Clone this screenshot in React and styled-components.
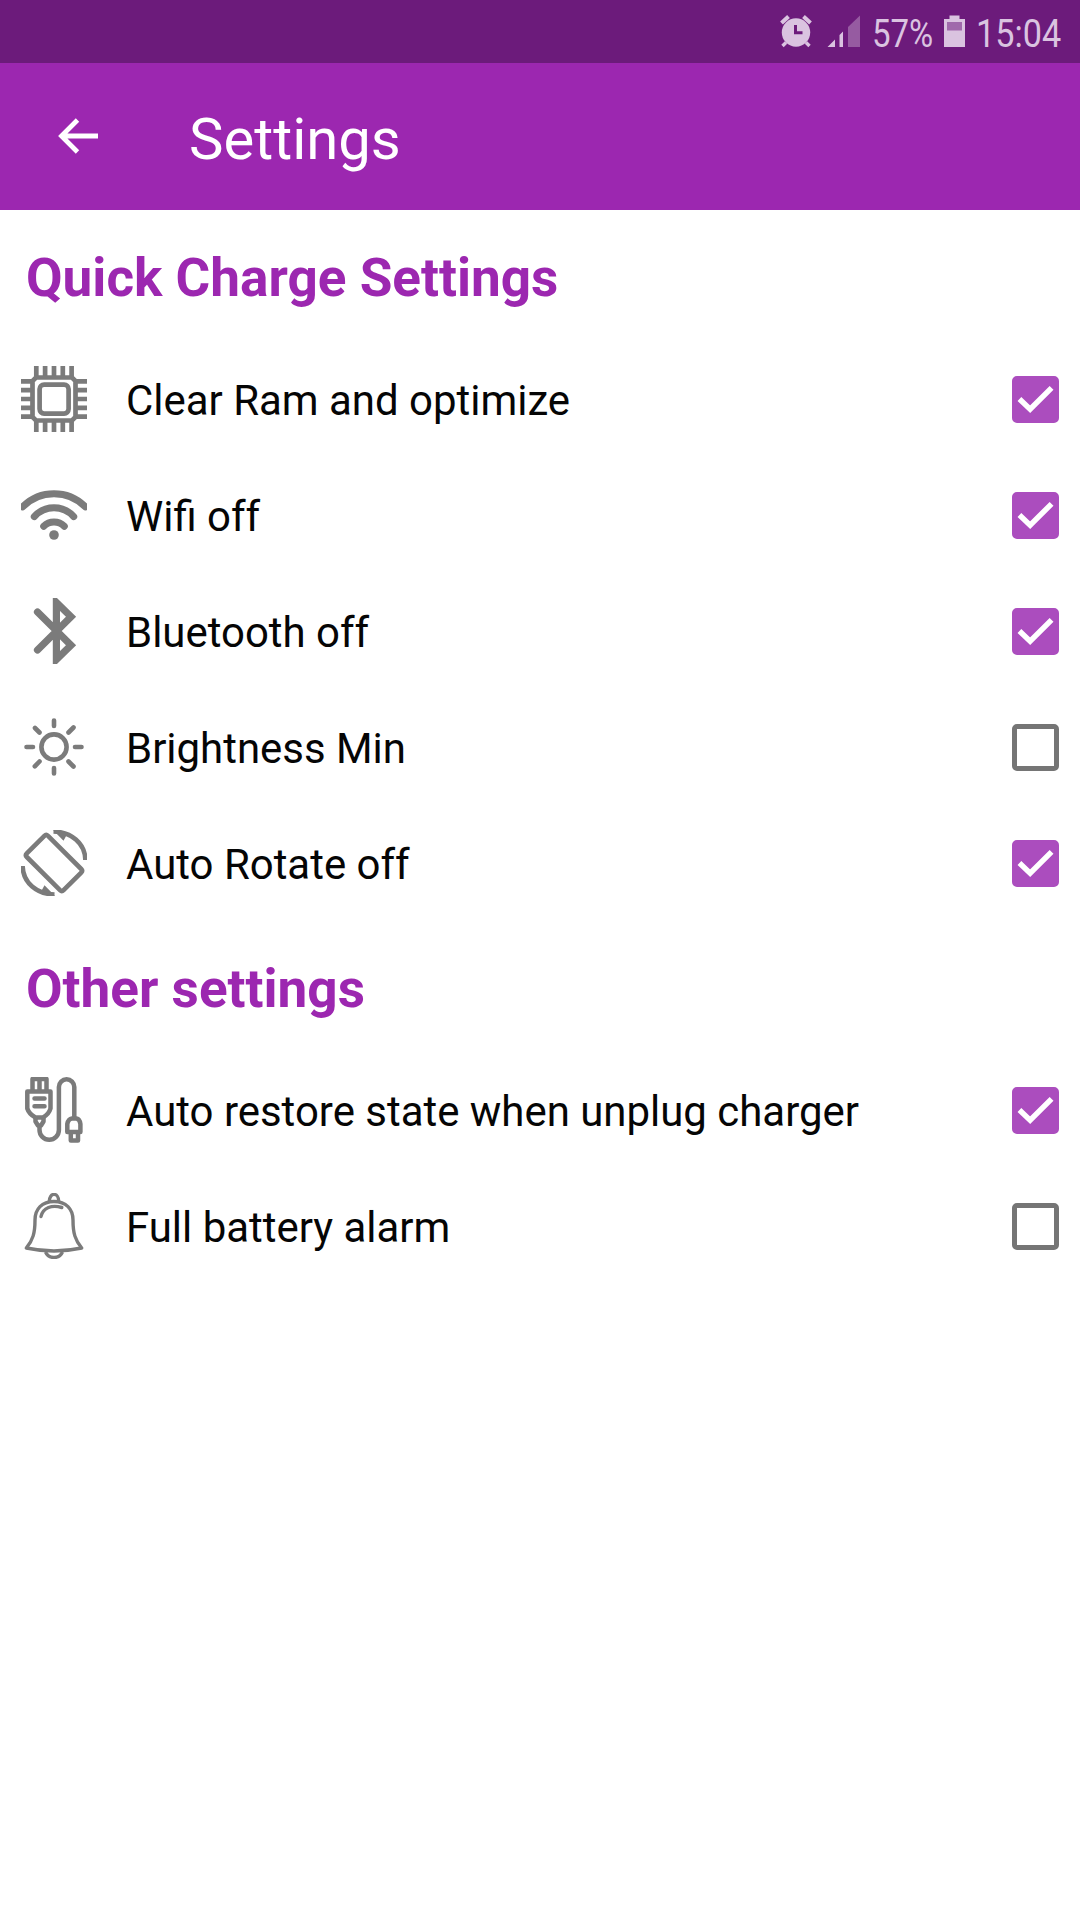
import React, { useState } from "react";
import styled, { createGlobalStyle } from "styled-components";

const GlobalStyle = createGlobalStyle`
  * { box-sizing: border-box; }
  body { margin: 0; background: #fff; }
`;

const Screen = styled.div`
  display: flex;
  flex-direction: column;
  width: 1080px;
  height: 1920px;
  background: #fff;
  font-family: Roboto, "Noto Sans", sans-serif;
  overflow: hidden;
`;

const StatusBar = styled.header`
  display: flex;
  justify-content: flex-end;
  align-items: center;
  height: 63px;
  padding-right: 18px;
  background: #6c1b7b;
  color: #dac3e0;
`;

const StatusIcon = styled.svg`
  display: block;
  flex: none;
  margin-right: ${(p) => p.$gap}px;
`;

const StatusText = styled.div`
  flex: none;
  width: ${(p) => p.$width}px;
  margin-right: ${(p) => p.$gap || 0}px;
  font-size: 39.5px;
  line-height: 63px;
  white-space: nowrap;
  padding-top: 3px;
  transform: scaleX(${(p) => p.$squeeze});
  transform-origin: left center;
`;

const AppBar = styled.div`
  display: flex;
  align-items: center;
  height: 147px;
  padding-left: 56px;
  background: #9c27b0;
  color: #fff;
`;

const BackButton = styled.button`
  display: flex;
  width: 133px;
  padding: 0 0 1px;
  border: 0;
  background: none;
  color: inherit;
`;

const Title = styled.h1`
  margin: 0;
  padding-top: 4px;
  font-size: 58px;
  font-weight: 400;
  line-height: 70px;
`;

const Section = styled.section`
  display: flex;
  flex-direction: column;
`;

const SectionTitle = styled.h2`
  margin: 0;
  height: 131px;
  padding: 36px 0 0 26px;
  color: #9c27b0;
  font-size: 53.1px;
  font-weight: 700;
  line-height: 64px;
`;

const Row = styled.label`
  display: flex;
  align-items: center;
  height: 116px;
  padding: 0 21px;
`;

const RowIcon = styled.svg`
  display: block;
  flex: none;
  width: 66px;
  height: 66px;
  fill: none;
  stroke: #7b7b7b;
  stroke-width: ${(p) => p.$weight || 4.6};
`;

const Label = styled.span`
  flex: 1;
  padding: 3px 0 0 39px;
  color: #050505;
  font-size: 41.95px;
  line-height: 50px;
`;

const HiddenInput = styled.input`
  appearance: none;
  width: 0;
  height: 0;
  margin: 0;
`;

const Box = styled.span`
  display: flex;
  flex: none;
  width: 47px;
  height: 47px;
  border: 5px solid ${(p) => (p.$on ? "#ab4dbe" : "#757575")};
  border-radius: 5px;
  background: ${(p) => (p.$on ? "#ab4dbe" : "#fff")};
`;

const Tick = styled.svg`
  display: block;
  width: 37px;
  height: 37px;
  fill: none;
  stroke: #fff;
  stroke-width: 5.6;
`;

const pins = [15.3, 24.1, 33, 41.8, 50.6];

const icons = {
  chip: (
    <RowIcon viewBox="0 0 66 66" $weight={4.7}>
      {pins.map((p) => (
        <path key={p} d={`M${p} 0V11M${p} 55V66M0 ${p}H11M55 ${p}H66`} />
      ))}
      <path d="M15 11.5H51L54.5 15V51L51 54.5H15L11.5 51V15Z" />
      <rect x="18.6" y="18.6" width="29" height="29" rx="4.5" />
    </RowIcon>
  ),
  wifi: (
    <RowIcon viewBox="0 0 66 66" $weight={7} strokeLinecap="round">
      <path d="M1.7 24.8A44 44 0 0 1 64.3 24.8" />
      <path d="M13.3 34.6A26.5 26.5 0 0 1 52.7 34.6" />
      <path d="M22.7 44.2A14.5 14.5 0 0 1 43.3 44.2" />
      <circle cx="33" cy="53" r="4.8" fill="#7b7b7b" stroke="none" />
    </RowIcon>
  ),
  bluetooth: (
    <RowIcon viewBox="0 0 66 66" $weight={7.2} strokeLinecap="round">
      <path d="M16.5 14L50 47.3L35.4 61.5V4.5L50 18.7L16.5 52" />
      <path d="M32 0H35.5L38 3V63L35.5 66H32Z" fill="#7b7b7b" stroke="none" />
    </RowIcon>
  ),
  sun: (
    <RowIcon viewBox="0 0 66 66" strokeLinecap="round">
      <circle cx="33" cy="33" r="12.6" />
      <path d="M33 6.5V12M33 54V59.5M5.5 33H12M54 33H60.5M14 14L18.5 18.5M47.5 47.5L52.5 52.5M52.5 13.5L47.5 18.5M18.5 47.5L13.8 52.3" />
    </RowIcon>
  ),
  rotate: (
    <RowIcon viewBox="0 0 66 66" strokeLinejoin="round">
      <path d="M27 5.8Q25.2 4 23.4 5.8L5.8 23.4Q4 25.2 5.8 27L39 60.2Q40.8 62 42.6 60.2L60.2 42.6Q62 40.8 60.2 39Z" />
      <path d="M32.5 1.5C50 2 64 13 64.4 30M33.5 64.5C16 64 2 53 1.6 36" />
      <path d="M32 0L47 2.5L42.5 10.8ZM34 66L19 63.5L23.5 55.2Z" fill="#7b7b7b" stroke="none" />
    </RowIcon>
  ),
  charger: (
    <RowIcon viewBox="0 0 66 66" $weight={4.5} strokeLinejoin="round">
      <path d="M11.5 14V2H25.5V14M18.5 2V14" />
      <path d="M6.3 14.5H29.5V31.5Q28 37 22 40.5H14.5Q8 37 6.3 31.5Z" />
      <path d="M13.5 21.5H23.5M13.5 29.3H23.5" strokeLinecap="round" />
      <path d="M14.5 41V44.5L17 48.5H20L22.5 44.5V41" />
      <path d="M18.5 48.5V53A9.7 9.7 0 0 0 37.9 53V10A7.7 7.7 0 0 1 53.3 10V41" />
      <path d="M46.3 55V47Q47.2 42 51 41.5H55.5Q58.7 42 59.4 47V55ZM49.8 56V63.5H57V56" />
    </RowIcon>
  ),
  bell: (
    <RowIcon viewBox="0 0 66 66" $weight={3.4} strokeLinejoin="round">
      <path d="M28.3 8.5C28.3 -1 37.7 -1 37.7 8.5" />
      <path d="M33 8.5C21 8.5 14 16 14 27C14 40 12 47 5.3 55Q33 61 60.7 55C54 47 52 40 52 27C52 16 45 8.5 33 8.5Z" />
      <path d="M24.5 59Q27 64.5 33 64.5T41.5 59" />
      <path d="M20 23.5C22 14.5 31 11.5 40.8 14.5" strokeLinecap="round" />
    </RowIcon>
  ),
};

const quickCharge = [
  { icon: "chip", label: "Clear Ram and optimize", on: true },
  { icon: "wifi", label: "Wifi off", on: true },
  { icon: "bluetooth", label: "Bluetooth off", on: true },
  { icon: "sun", label: "Brightness Min", on: false },
  { icon: "rotate", label: "Auto Rotate off", on: true },
];

const other = [
  { icon: "charger", label: "Auto restore state when unplug charger", on: true },
  { icon: "bell", label: "Full battery alarm", on: false },
];

function Setting({ icon, label, on }) {
  const [checked, setChecked] = useState(on);
  return (
    <Row>
      {icons[icon]}
      <Label>{label}</Label>
      <HiddenInput type="checkbox" checked={checked} onChange={() => setChecked(!checked)} />
      <Box $on={checked}>
        {checked && (
          <Tick viewBox="0 0 38 38">
            <path d="M2.5 18.5L13.5 29L35.5 7" />
          </Tick>
        )}
      </Box>
    </Row>
  );
}

export default function App() {
  return (
    <Screen>
      <GlobalStyle />
      <StatusBar>
        <StatusIcon width="32" height="34" viewBox="0 0 32 34" $gap={15}>
          <circle cx="16" cy="17.5" r="14.2" fill="currentColor" />
          <path d="M1.5 8L8.5 1.5M30.5 8L23.5 1.5" stroke="currentColor" strokeWidth="4" />
          <path d="M6 27.5L2.5 31M26 27.5L29.5 31" stroke="currentColor" strokeWidth="3.4" />
          <path d="M15.5 10V17.7H22.5" fill="none" stroke="#6c1b7b" strokeWidth="3" />
        </StatusIcon>
        <StatusIcon width="34" height="34" viewBox="0 0 34 34" $gap={11}>
          <path d="M0.5 32L8 24.5V32ZM12.5 20L16 16.5V32H12.5Z" fill="currentColor" />
          <path d="M21 12L33 0.5V32H21Z" fill="#965ba1" />
        </StatusIcon>
        <StatusText $width={62} $gap={10} $squeeze={0.835}>57%</StatusText>
        <StatusIcon width="21" height="34" viewBox="0 0 21 34" $gap={11}>
          <path d="M5.5 0.5H15.5V4H21V32H0V4H5.5Z" fill="currentColor" />
          <rect x="3" y="7" width="15" height="8.5" fill="#a069ab" />
        </StatusIcon>
        <StatusText $width={86} $squeeze={0.865}>15:04</StatusText>
      </StatusBar>
      <AppBar>
        <BackButton aria-label="Back">
          <svg width="44" height="40" viewBox="0 0 44 40" fill="none" stroke="currentColor" strokeWidth="4.8">
            <path d="M42 20H5M21.5 4L5.5 20L21.5 36" />
          </svg>
        </BackButton>
        <Title>Settings</Title>
      </AppBar>
      <Section>
        <SectionTitle>Quick Charge Settings</SectionTitle>
        {quickCharge.map((s) => (
          <Setting key={s.label} {...s} />
        ))}
      </Section>
      <Section>
        <SectionTitle>Other settings</SectionTitle>
        {other.map((s) => (
          <Setting key={s.label} {...s} />
        ))}
      </Section>
    </Screen>
  );
}
